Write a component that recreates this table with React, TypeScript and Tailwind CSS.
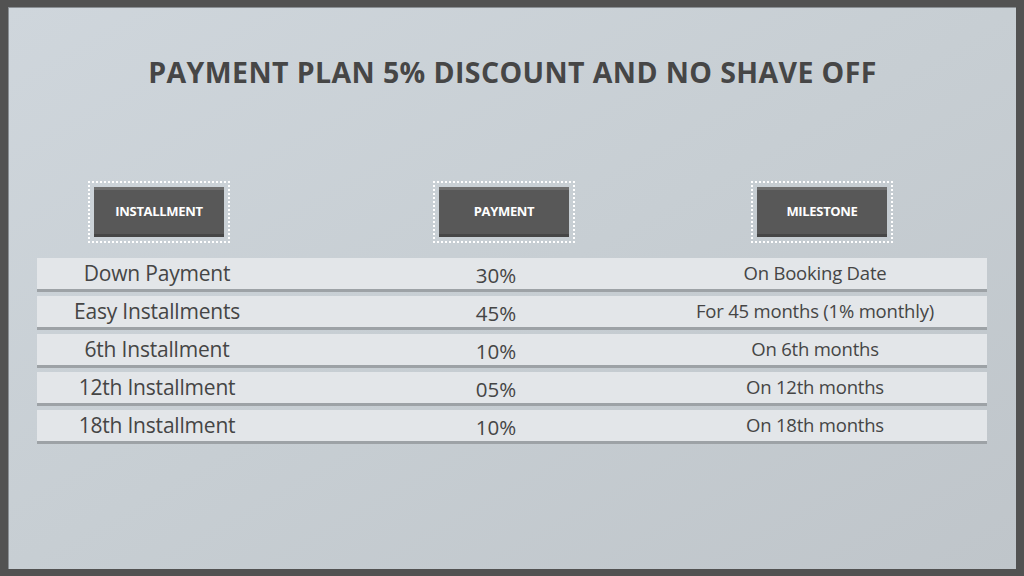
import React from "react";

const rows = [
  ["Down Payment", "30%", "On Booking Date"],
  ["Easy Installments", "45%", "For 45 months (1% monthly)"],
  ["6th Installment", "10%", "On 6th months"],
  ["12th Installment", "05%", "On 12th months"],
  ["18th Installment", "10%", "On 18th months"],
];

function HeaderBox({ label }: { label: string }) {
  return (
    <div className="border-2 border-dotted border-white p-[4px]">
      <div className="flex h-[50px] w-[130px] items-center justify-center bg-[#585858] border-t-[3px] border-t-[#6e6e6e] border-b-[3px] border-b-[#464646] text-[13px] font-bold tracking-tight text-white">
        {label}
      </div>
    </div>
  );
}

export default function App() {
  return (
    <div
      className="flex h-[576px] w-[1024px] flex-col bg-[#525252] pt-[7px] pr-[8px] pb-[7px] pl-[8px]"
      style={{ fontFamily: '"Open Sans", sans-serif' }}
    >
      <div className="flex flex-1 flex-col bg-gradient-to-br from-[#cfd6dc] via-[#c7ced3] to-[#bfc5ca] border-l border-t border-[#8a8f94] px-[28px]">
        <h1 className="mt-[43px] text-center text-[28.5px] font-bold tracking-[0.4px] text-[#464646]">
          PAYMENT PLAN 5% DISCOUNT AND NO SHAVE OFF
        </h1>
        <div className="mt-[87px] grid grid-cols-[244px_446px_190px] justify-items-center">
          <HeaderBox label="INSTALLMENT" />
          <HeaderBox label="PAYMENT" />
          <HeaderBox label="MILESTONE" />
        </div>
        <div className="mt-[15px] flex w-[950px] flex-col gap-[4px]">
          {rows.map((r, i) => (
            <div
              key={i}
              className="grid h-[34px] grid-cols-[240px_438px_200px] items-center bg-[#e3e6e9] border-b-[3px] border-b-[#9da2a6] text-[#454545]"
            >
              <div className="flex justify-center whitespace-nowrap text-[21px] font-medium tracking-[-0.2px] pb-[2px]">{r[0]}</div>
              <div className="flex justify-center whitespace-nowrap text-[20.5px] font-medium pt-[2px]">{r[1]}</div>
              <div className="flex justify-center whitespace-nowrap text-[18.5px] font-medium tracking-[-0.2px] pb-[3px]">{r[2]}</div>
            </div>
          ))}
        </div>
      </div>
    </div>
  );
}
